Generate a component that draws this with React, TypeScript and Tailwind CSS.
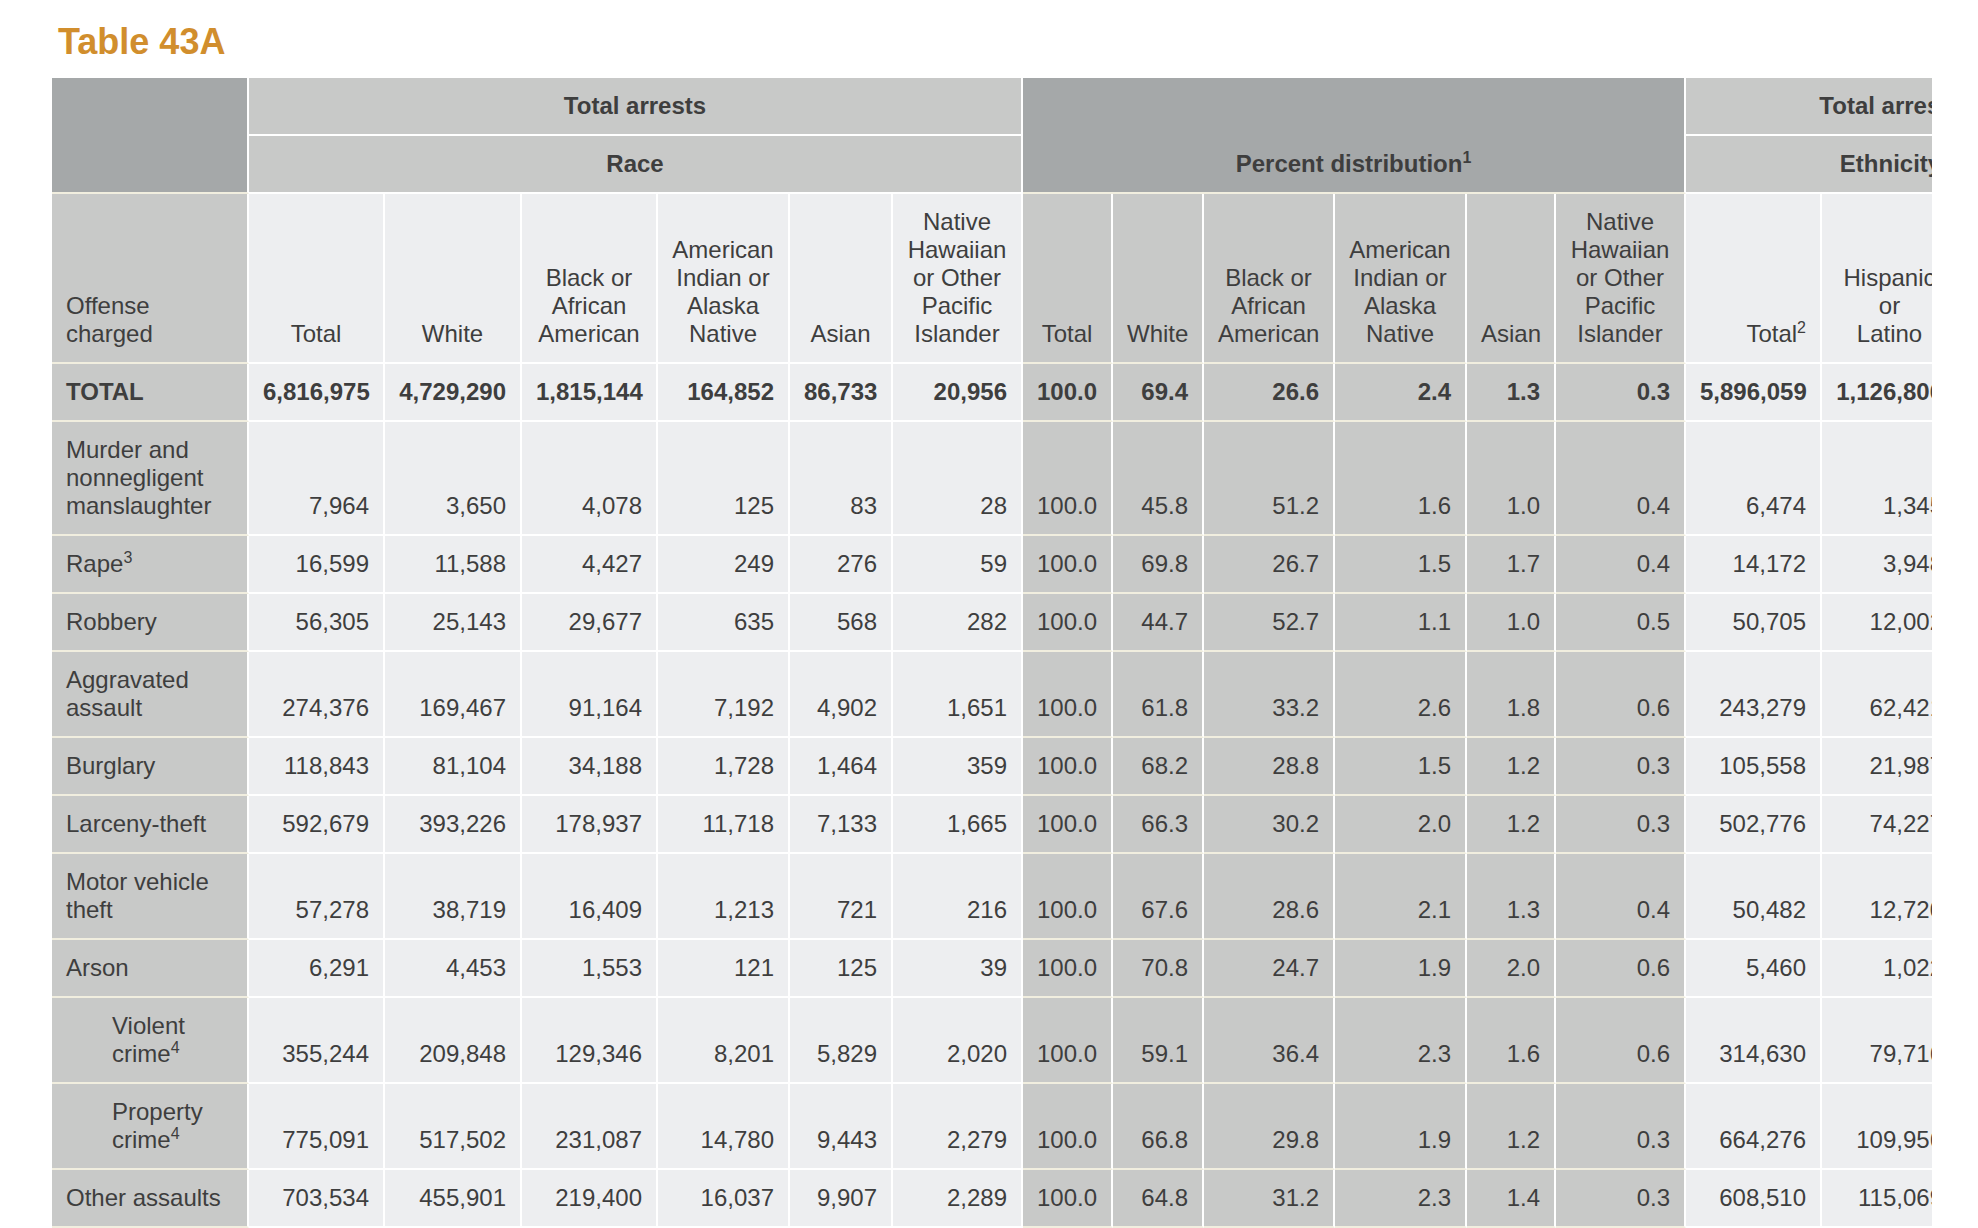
import React from "react";

type Shade = "mid" | "light" | "dark" | "midHead";

const shadeClass: Record<Shade, string> = {
  mid: "bg-[#c8c9c8] border-b-[#f1eedf]",
  light: "bg-[#edeef0] border-b-white",
  dark: "bg-[#a5a8a9] border-b-[#f1eedf]",
  midHead: "bg-[#c8c9c8] border-b-white",
};

const alignClass = {
  left: "text-left",
  right: "text-right",
  center: "text-center",
};

function Cell({
  shade,
  align = "right",
  bold = false,
  className = "",
  children,
}: {
  shade: Shade;
  align?: "left" | "right" | "center";
  bold?: boolean;
  className?: string;
  children?: React.ReactNode;
}) {
  return (
    <div
      className={`flex flex-col justify-end border-r-2 border-b-2 border-r-white px-[14px] py-[14px] leading-[28px] ${
        shadeClass[shade]
      } ${alignClass[align]} ${bold ? "font-bold" : ""} ${className}`}
    >
      <div>{children}</div>
    </div>
  );
}

// column shade: offense col + percent cols are mid gray, counts are light
const colShade = (i: number): Shade => (i === 0 || (i >= 7 && i <= 12) ? "mid" : "light");

const Sup = ({ n }: { n: string }) => (
  <sup className="text-[16px] leading-none -top-[0.55em]">{n}</sup>
);

type Row = {
  label: React.ReactNode;
  values: string[];
  bold?: boolean;
  indent?: boolean;
};

const rows: Row[] = [
  {
    label: "TOTAL",
    bold: true,
    values: ["6,816,975", "4,729,290", "1,815,144", "164,852", "86,733", "20,956", "100.0", "69.4", "26.6", "2.4", "1.3", "0.3", "5,896,059", "1,126,806", "4,769,253"],
  },
  {
    label: "Murder and nonnegligent manslaughter",
    values: ["7,964", "3,650", "4,078", "125", "83", "28", "100.0", "45.8", "51.2", "1.6", "1.0", "0.4", "6,474", "1,345", "5,129"],
  },
  {
    label: (
      <>
        Rape<Sup n="3" />
      </>
    ),
    values: ["16,599", "11,588", "4,427", "249", "276", "59", "100.0", "69.8", "26.7", "1.5", "1.7", "0.4", "14,172", "3,948", "10,224"],
  },
  {
    label: "Robbery",
    values: ["56,305", "25,143", "29,677", "635", "568", "282", "100.0", "44.7", "52.7", "1.1", "1.0", "0.5", "50,705", "12,002", "38,703"],
  },
  {
    label: "Aggravated assault",
    values: ["274,376", "169,467", "91,164", "7,192", "4,902", "1,651", "100.0", "61.8", "33.2", "2.6", "1.8", "0.6", "243,279", "62,421", "180,858"],
  },
  {
    label: "Burglary",
    values: ["118,843", "81,104", "34,188", "1,728", "1,464", "359", "100.0", "68.2", "28.8", "1.5", "1.2", "0.3", "105,558", "21,987", "83,571"],
  },
  {
    label: "Larceny-theft",
    values: ["592,679", "393,226", "178,937", "11,718", "7,133", "1,665", "100.0", "66.3", "30.2", "2.0", "1.2", "0.3", "502,776", "74,227", "428,549"],
  },
  {
    label: "Motor vehicle theft",
    values: ["57,278", "38,719", "16,409", "1,213", "721", "216", "100.0", "67.6", "28.6", "2.1", "1.3", "0.4", "50,482", "12,720", "37,762"],
  },
  {
    label: "Arson",
    values: ["6,291", "4,453", "1,553", "121", "125", "39", "100.0", "70.8", "24.7", "1.9", "2.0", "0.6", "5,460", "1,022", "4,438"],
  },
  {
    label: (
      <>
        Violent crime<Sup n="4" />
      </>
    ),
    indent: true,
    values: ["355,244", "209,848", "129,346", "8,201", "5,829", "2,020", "100.0", "59.1", "36.4", "2.3", "1.6", "0.6", "314,630", "79,716", "234,914"],
  },
  {
    label: (
      <>
        Property crime<Sup n="4" />
      </>
    ),
    indent: true,
    values: ["775,091", "517,502", "231,087", "14,780", "9,443", "2,279", "100.0", "66.8", "29.8", "1.9", "1.2", "0.3", "664,276", "109,956", "554,320"],
  },
  {
    label: "Other assaults",
    values: ["703,534", "455,901", "219,400", "16,037", "9,907", "2,289", "100.0", "64.8", "31.2", "2.3", "1.4", "0.3", "608,510", "115,069", "493,441"],
  },
  {
    label: "Forgery and counterfeiting",
    values: ["25,176", "16,510", "8,188", "197", "238", "43", "100.0", "65.6", "32.5", "0.8", "0.9", "0.2", "21,488", "3,902", "17,586"],
  },
];

const raceHeads = [
  "Total",
  "White",
  "Black or African American",
  "American Indian or Alaska Native",
  "Asian",
  "Native Hawaiian or Other Pacific Islander",
];

export default function App() {
  return (
    <div
      className="h-screen overflow-hidden bg-white pl-[52px] pr-[46px] text-[24px] text-[#3e3e3e]"
      style={{ fontFamily: '"Liberation Sans", Arial, Helvetica, sans-serif' }}
    >
      <h1 className="pl-[6px] pt-[21px] mb-[15px] text-[36px] leading-[42px] font-bold text-[#d18e2d]">
        Table 43A
      </h1>
      <div className="overflow-hidden">
        <div className="grid w-[2045px] grid-cols-[197px_136px_137px_136px_132px_103px_130px_90px_91px_131px_132px_89px_130px_136px_137px_138px]">
          {/* header rows 1-2 */}
          <Cell shade="dark" className="row-span-2" />
          <Cell shade="midHead" align="center" bold className="col-span-6">
            Total arrests
          </Cell>
          <Cell shade="dark" align="center" bold className="col-span-6 row-span-2">
            Percent distribution<Sup n="1" />
          </Cell>
          <Cell shade="midHead" align="center" bold className="col-span-3">
            Total arrests
          </Cell>
          <Cell shade="midHead" align="center" bold className="col-span-6">
            Race
          </Cell>
          <Cell shade="midHead" align="center" bold className="col-span-3">
            Ethnicity
          </Cell>

          {/* header row 3 */}
          <Cell shade="mid" align="left">
            Offense charged
          </Cell>
          {raceHeads.map((h, i) => (
            <Cell key={"c" + i} shade="light" align="center">
              {h}
            </Cell>
          ))}
          {raceHeads.map((h, i) => (
            <Cell key={"p" + i} shade="mid" align="center">
              {h}
            </Cell>
          ))}
          <Cell shade="light" align="right">
            Total<Sup n="2" />
          </Cell>
          <Cell shade="light" align="center">
            Hispanic
            <br />
            or
            <br />
            Latino
          </Cell>
          <Cell shade="light" align="center">
            Not Hispanic or Latino
          </Cell>

          {/* body */}
          {rows.map((r, ri) => (
            <React.Fragment key={ri}>
              <Cell shade="mid" align="left" bold={r.bold} className={r.indent ? "pl-[60px]" : ""}>
                {r.label}
              </Cell>
              {r.values.map((v, vi) => (
                <Cell key={vi} shade={colShade(vi + 1)} bold={r.bold}>
                  {v}
                </Cell>
              ))}
            </React.Fragment>
          ))}
        </div>
      </div>
    </div>
  );
}
